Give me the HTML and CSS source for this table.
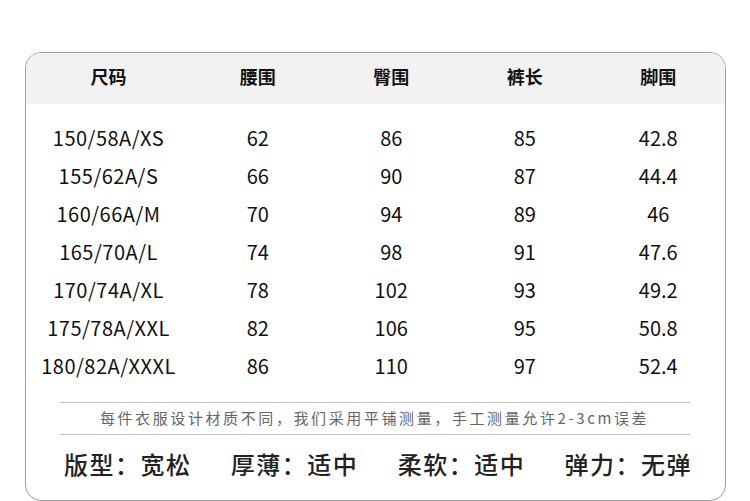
FILE: index.html
```html
<!DOCTYPE html>
<html lang="zh">
<head>
<meta charset="utf-8">
<link rel="stylesheet" href="styles.css">
</head>
<body>
<div class="card">
  <div class="row head">
    <div>尺码</div><div>腰围</div><div>臀围</div><div>裤长</div><div>脚围</div>
  </div>
  <div class="body">
    <div class="row"><div class="size">150/58A/XS</div><div>62</div><div>86</div><div>85</div><div>42.8</div></div>
    <div class="row"><div class="size">155/62A/S</div><div>66</div><div>90</div><div>87</div><div>44.4</div></div>
    <div class="row"><div class="size">160/66A/M</div><div>70</div><div>94</div><div>89</div><div>46</div></div>
    <div class="row"><div class="size">165/70A/L</div><div>74</div><div>98</div><div>91</div><div>47.6</div></div>
    <div class="row"><div class="size">170/74A/XL</div><div>78</div><div>102</div><div>93</div><div>49.2</div></div>
    <div class="row"><div class="size">175/78A/XXL</div><div>82</div><div>106</div><div>95</div><div>50.8</div></div>
    <div class="row"><div class="size">180/82A/XXXL</div><div>86</div><div>110</div><div>97</div><div>52.4</div></div>
  </div>
  <div class="note">每件衣服设计材质不同，我们采用平铺测量，手工测量允许2-3cm误差</div>
  <div class="props">
    <span>版型：宽松</span><span>厚薄：适中</span><span>柔软：适中</span><span>弹力：无弹</span>
  </div>
</div>
</body>
</html>
```
FILE: styles.css
```css
html, body {
  margin: 0;
  padding: 0;
  background: #fff;
}
body {
  font-family: "Noto Sans CJK SC", "Noto Sans", sans-serif;
  color: #111;
  padding-top: 52px;
  padding-left: 25px;
}
.card {
  box-sizing: border-box;
  width: 701px;
  height: 449px;
  border: 1px solid #a0a0a0;
  border-radius: 16px;
  overflow: hidden;
}
.row {
  display: grid;
  grid-template-columns: 165px repeat(4, 1fr);
  text-align: center;
  height: 38px;
  line-height: 38px;
  font-size: 20px;
}
.size {
  letter-spacing: 0.5px;
}
.head {
  background: #f2f2f2;
  height: 51px;
  line-height: 47px;
  padding-bottom: 4px;
  box-sizing: border-box;
  font-weight: 700;
  font-size: 18px;
}
.body {
  padding-top: 15px;
}
.note {
  margin: 17px 35px 0 33px;
  border-top: 1px solid #c4c4c4;
  border-bottom: 1px solid #c4c4c4;
  height: 31px;
  line-height: 30px;
  text-align: center;
  font-size: 15px;
  letter-spacing: 2.6px;
  color: #666;
}
.props {
  display: flex;
  justify-content: space-between;
  padding: 0 33px 0 38px;
  height: 58px;
  line-height: 58px;
  font-size: 24px;
  letter-spacing: 1.5px;
  font-weight: 500;
  color: #222;
}
```
